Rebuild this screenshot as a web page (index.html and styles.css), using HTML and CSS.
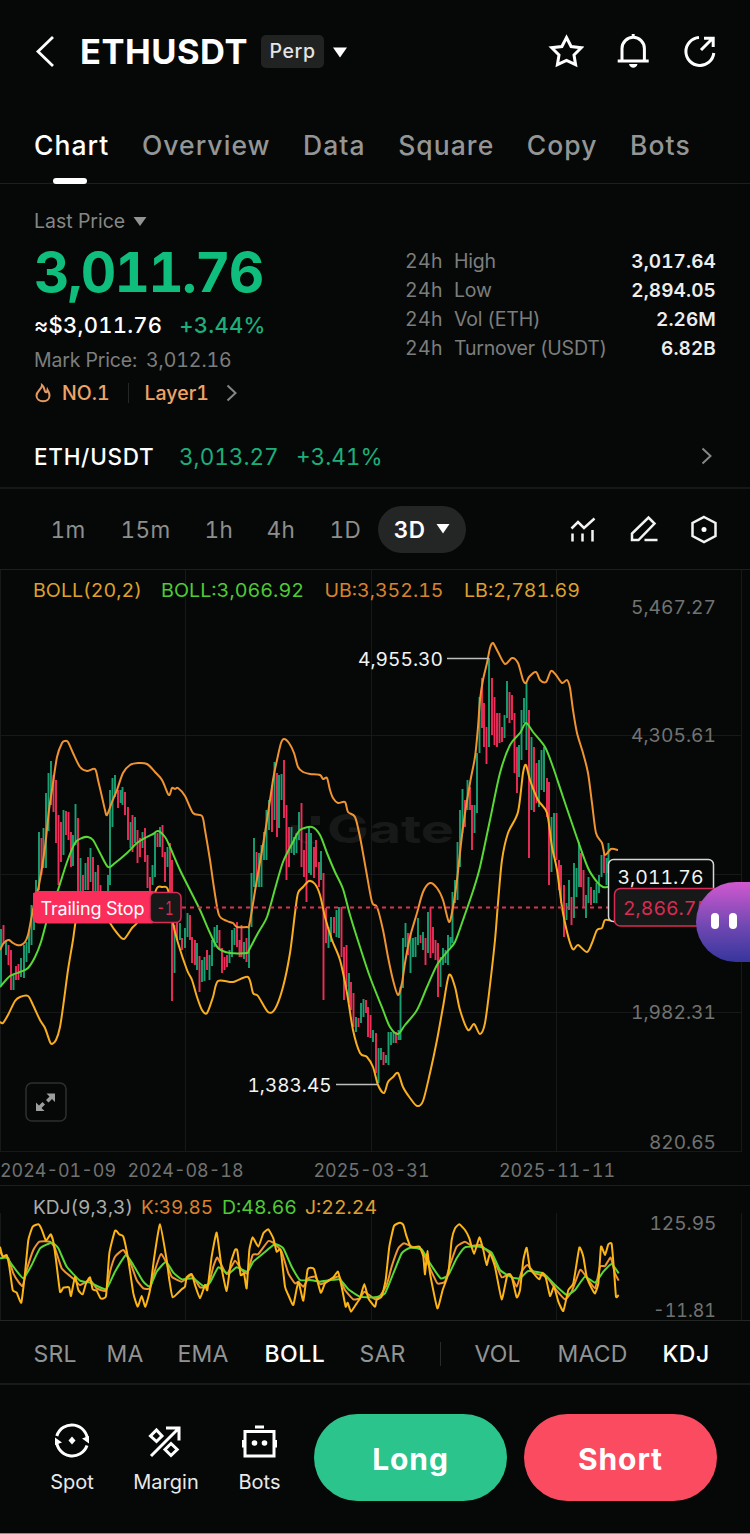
FILE: index.html
```html
<!DOCTYPE html>
<html lang="en">
<head>
<meta charset="utf-8">
<title>ETHUSDT Perp</title>
<link rel="stylesheet" href="styles.css">
</head>
<body>
<main class="app">
  <header class="top">
    <svg class="back" width="20" height="34" viewBox="0 0 20 34"><path d="M18 2 3 16.500 18 31"/></svg>
    <h1 class="symbol">ETHUSDT</h1>
    <span class="perp">Perp</span>
    <svg class="solid white" width="16" height="12" viewBox="0 0 16 12"><path d="M1 1.500h14L8 11.500z"/></svg>
    <div class="actions">
      <svg class="line" width="36" height="36" viewBox="0 0 36 36"><path d="M18.500 3.500l4.600 9 10.200 1.200-7.300 7.300 1.600 9.700L18.500 26.500 9.400 30.700l1.600-9.700L3.700 13.700l10.200-1.200z"/></svg>
      <svg class="line" width="36" height="36" viewBox="0 0 36 36"><path d="M7 26V14.500a11.200 11.200 0 0 1 22.400 0V26M2.700 27h31M18.200 0v3"/><path class="fill" stroke="none" d="M14 30h8.500c-1 5-7.500 5-8.500 0z"/></svg>
      <svg class="line" width="36" height="36" viewBox="0 0 36 36"><path d="M17 3.500A14 14 0 1 0 31.800 19M19 16 30.500 4.500M22 4.200h9.200V13"/></svg>
    </div>
  </header>
  <nav class="tabs">
    <a class="on">Chart</a><a>Overview</a><a>Data</a><a>Square</a><a>Copy</a><a>Bots</a>
  </nav>
  <section class="quote">
    <div class="price">
      <div class="lastlabel"><span>Last Price</span><svg class="solid" width="14" height="10" viewBox="0 0 14 10"><path d="M.500 1h13L7 10z"/></svg></div>
      <div class="last">3,011.76</div>
      <div class="fiat"><span class="usd">≈$3,011.76</span><span class="up">+3.44%</span></div>
      <div class="mark"><span>Mark Price:</span><span class="num">3,012.16</span></div>
      <div class="tags">
        <svg class="flame" width="18" height="20" viewBox="0 0 18 20"><path d="M8 2c.300 4-5.500 6-5.500 10.500 0 3.500 3 5.700 6.700 5.700s6.300-2.200 6.300-5.700c0-3-1.300-4-2-5.500-.300 1.800-1.400 2.600-2.100 2C10 7.500 10.800 4 8 2z"/></svg>
        <span class="no">NO.1</span><i></i><span class="layer">Layer1</span>
        <svg class="chev" width="11" height="18" viewBox="0 0 11 18"><path d="M1.500 1.500 9.500 9l-8 7.500"/></svg>
      </div>
    </div>
    <dl class="stats">
      <div><dt><span>24h</span>High</dt><dd>3,017.64</dd></div>
      <div><dt><span>24h</span>Low</dt><dd>2,894.05</dd></div>
      <div><dt><span>24h</span>Vol (ETH)</dt><dd>2.26M</dd></div>
      <div><dt><span>24h</span>Turnover (USDT)</dt><dd>6.82B</dd></div>
    </dl>
  </section>
  <section class="pair">
    <b>ETH/USDT</b><span class="up p1">3,013.27</span><span class="up p2">+3.41%</span>
    <svg class="chev" width="11" height="18" viewBox="0 0 11 18"><path d="M1.500 1.500 9.500 9l-8 7.500"/></svg>
  </section>
  <nav class="frames">
    <a class="f1">1m</a><a class="f2">15m</a><a class="f3">1h</a><a class="f4">4h</a><a class="f5">1D</a>
    <a class="pill">3D<svg class="solid white" width="14" height="11" viewBox="0 0 14 11"><path d="M.500 0h13L7 9.500z"/></svg></a>
    <div class="tools">
      <svg class="thin" width="30" height="30" viewBox="0 0 30 30"><path d="M4.500 14.500 11 8 17 14 27.500 4.500M5.500 19.500v8M15.500 19.500v8M25.500 16v11.500"/></svg>
      <svg class="thin" width="30" height="30" viewBox="0 0 30 30"><path d="M4 26v-6.500L20.500 3.500l6 6L10.500 26zM16.500 26h13"/></svg>
      <svg class="thin" width="30" height="30" viewBox="0 0 30 30"><path d="M15 3 26.500 9v13L15 28 3.500 22V9z"/><circle class="fill" cx="15" cy="15.500" r="2.500" stroke="none"/></svg>
    </div>
  </nav>
  <section class="chart">
    <svg class="plot" width="750" height="615" viewBox="0 570 750 615">
      <path class="grid" d="M0 735.500H742M0 874.500H742M0 1012.500H742M0 1151.500H742M.500 570V1151M185.500 570V1151M371.500 570V1151M556.500 570V1151M741.500 570V1151"/>
      <g class="watermark"><path d="M311 816h9v9h-9zM291 825a18 18 0 0 0 26 17h-9a11 11 0 0 1-8-17z"/><text x="327" y="843" textLength="127" lengthAdjust="spacingAndGlyphs">Gate</text></g>
      <g id="candles"></g>
      <path id="upper" class="curve upper"/><path id="lower" class="curve lower"/><path id="middle" class="curve middle"/>
      <path class="stop" d="M182 907.500H614"/>
      <path class="leader" d="M447 658.500H489M336 1084.500H377"/>
      <g class="peak"><text x="358" y="666" textLength="85" lengthAdjust="spacingAndGlyphs">4,955.30</text><text x="247.500" y="1092" textLength="84" lengthAdjust="spacingAndGlyphs">1,383.45</text></g>
      <g class="legend">
        <text class="c-low" x="33" y="597" textLength="109" lengthAdjust="spacingAndGlyphs">BOLL(20,2)</text>
        <text class="c-mid" x="161" y="597" textLength="143" lengthAdjust="spacingAndGlyphs">BOLL:3,066.92</text>
        <text class="c-up" x="324.500" y="597" textLength="119" lengthAdjust="spacingAndGlyphs">UB:3,352.15</text>
        <text class="c-low" x="464" y="597" textLength="116" lengthAdjust="spacingAndGlyphs">LB:2,781.69</text>
      </g>
      <g class="axis">
        <text x="631" y="614" textLength="85" lengthAdjust="spacingAndGlyphs">5,467.27</text><text x="631" y="741.500" textLength="85" lengthAdjust="spacingAndGlyphs">4,305.61</text>
        <text x="631" y="1018.500" textLength="85" lengthAdjust="spacingAndGlyphs">1,982.31</text><text x="649" y="1148.500" textLength="67" lengthAdjust="spacingAndGlyphs">820.65</text>
        <text x="0" y="1176.500" textLength="116" lengthAdjust="spacingAndGlyphs">2024-01-09</text><text x="127.500" y="1176.500" textLength="116" lengthAdjust="spacingAndGlyphs">2024-08-18</text>
        <text x="313.500" y="1176.500" textLength="116" lengthAdjust="spacingAndGlyphs">2025-03-31</text><text x="499" y="1176.500" textLength="116" lengthAdjust="spacingAndGlyphs">2025-11-11</text>
      </g>
      <g class="now"><rect x="608.500" y="859.500" width="105" height="62" rx="5"/><text x="617.500" y="884" textLength="86" lengthAdjust="spacingAndGlyphs">3,011.76</text></g>
      <g class="trigger"><rect x="614.500" y="888.500" width="105" height="37.500" rx="6"/><text x="623" y="915" textLength="86" lengthAdjust="spacingAndGlyphs">2,866.75</text></g>
      <g class="order"><rect class="tag" x="33" y="891" width="124" height="32.500" rx="5"/><rect class="qty" x="150" y="892.500" width="31" height="30" rx="5"/><text class="name" x="40.500" y="914.500" textLength="104">Trailing Stop</text><text class="count" x="156.500" y="914.500" textLength="17" lengthAdjust="spacingAndGlyphs">-1</text></g>
      <g class="expand"><rect x="26" y="1083" width="40" height="38" rx="6"/><path d="M46.500 1093.500h8.500v8.500l-3-3-3.500 3.500-2.500-2.500 3.500-3.500zM36 1102.500v8.500h8.500l-3-3 3.500-3.500-2.500-2.500-3.500 3.500z"/></g>
    </svg>
    <svg class="bot" width="54" height="80" viewBox="0 0 54 80">
      <defs><linearGradient id="violet" x1="0" y1="0" x2="0" y2="1"><stop offset="0" stop-color="#d158d0"/><stop offset=".550" stop-color="#7048b2"/><stop offset="1" stop-color="#36369d"/></linearGradient></defs>
      <path fill="url(#violet)" d="M54 0H40a40 40 0 0 0 0 80h14z"/><rect x="15" y="31" width="8" height="16" rx="4"/><rect x="33" y="31" width="8" height="16" rx="4"/>
    </svg>
  </section>
  <section class="kdj">
    <svg width="750" height="136" viewBox="0 1185 750 136">
      <path class="grid" d="M.500 1213V1320M185.500 1213V1320M371.500 1213V1320M556.500 1213V1320M741.500 1213V1320"/>
      <g class="legend"><text class="plain" x="33" y="1213.500" textLength="100" lengthAdjust="spacingAndGlyphs">KDJ(9,3,3)</text><text class="c-up" x="141" y="1213.500" textLength="72" lengthAdjust="spacingAndGlyphs">K:39.85</text><text class="c-mid" x="222" y="1213.500" textLength="75" lengthAdjust="spacingAndGlyphs">D:48.66</text><text class="c-low" x="305" y="1213.500" textLength="72" lengthAdjust="spacingAndGlyphs">J:22.24</text></g>
      <g class="axis"><text x="649.500" y="1230" textLength="67" lengthAdjust="spacingAndGlyphs">125.95</text><text x="653" y="1317" textLength="63" lengthAdjust="spacingAndGlyphs">-11.81</text></g>
      <path id="k" class="curve upper"/><path id="d" class="curve middle"/><path id="j" class="curve jline"/>
    </svg>
  </section>
  <nav class="indicators">
    <a class="i1">SRL</a><a class="i2">MA</a><a class="i3">EMA</a><a class="i4 on">BOLL</a><a class="i5">SAR</a><i></i><a class="i6">VOL</a><a class="i7">MACD</a><a class="i8 on">KDJ</a>
  </nav>
  <footer class="bottom">
    <a class="dock d1"><svg class="line" width="36" height="36" viewBox="0 0 36 36"><path d="M2.800 13A15.700 15.700 0 0 1 33.500 18M33 22.500A15.700 15.700 0 0 1 2.500 17.500"/><path class="fill" stroke="none" d="M28 15.500 35 13v7.500zM8 19.500 1 22V14.500zM18 13.500l3.500 4-3.500 4-3.500-4z"/></svg>Spot</a>
    <a class="dock d2"><svg class="line" width="36" height="36" viewBox="0 0 36 36"><path d="M3 33 30.500 5.500M18 5h13V17.500M8.500 7l5.500 6-5.500 5.500-6-5.500zM23 20.500l6.200 6-6.200 6-6-6z"/></svg>Margin</a>
    <a class="dock d3"><svg class="line" width="36" height="36" viewBox="0 0 36 36"><path d="M3 8.500h29V33H3zM13 4h9M1.500 17v7.500M33.500 17v7.500"/><circle class="fill" stroke="none" cx="12.500" cy="20" r="2.800"/><circle class="fill" stroke="none" cx="22.500" cy="20" r="2.800"/></svg>Bots</a>
    <button class="buy">Long</button><button class="sell">Short</button>
  </footer>
</main>
<script src="chart.js"></script>
</body>
</html>
```
FILE: styles.css
```css
* { box-sizing: border-box; }
body { margin: 0; background: #060807; font-family: Inter, "Liberation Sans", sans-serif; font-variant-numeric: tabular-nums; color: #fff; }
svg { display: block; flex: none; }
h1, dl, dd { margin: 0; }
a, span { white-space: nowrap; }
.app { width: 750px; height: 1534px; overflow: hidden; border-bottom: 1px solid #8d8f8e; }
.top { height: 103px; display: flex; align-items: center; padding-left: 35px; }
.back { fill: none; stroke: #fff; stroke-width: 2.800; }
.symbol { font-size: 34.500px; font-weight: 700; letter-spacing: .500px; margin-left: 25px; width: 167px; white-space: nowrap; }
.perp { width: 63px; height: 33px; margin: 0 8px 0 14px; border-radius: 5px; background: #212322; font-size: 19.500px; line-height: 32px; text-align: center; font-weight: 500; color: #e4e5e4; letter-spacing: .600px; }
.solid { fill: #929493; }
.solid.white { fill: #fff; }
.actions { margin-left: auto; margin-right: 32px; display: flex; gap: 31px; }
.line { fill: none; stroke: #fff; stroke-width: 3; }
.fill { fill: #fff; }
.tabs { height: 81px; border-bottom: 1px solid #1d1f1e; padding: 27px 0 0 34px; display: flex; gap: 32.500px; font-size: 26.500px; font-weight: 500; line-height: 30px; color: #949695; letter-spacing: 1.050px; }
.tabs .on { color: #fff; position: relative; }
.tabs .on::after { content: ""; position: absolute; left: 19px; bottom: -1px; width: 34px; height: 6px; border-radius: 3px; background: #fff; }
.quote { height: 236px; padding: 24px 34px 0; display: flex; justify-content: space-between; }
.lastlabel { display: flex; align-items: center; gap: 8px; font-size: 19.500px; line-height: 26px; height: 26px; color: #858786; }
.last { font-size: 55px; line-height: 76px; height: 76px; font-weight: 700; color: #0fbd7c; letter-spacing: -1.800px; }
.fiat { display: flex; gap: 17px; font-size: 22px; line-height: 30px; height: 32px; font-weight: 500; letter-spacing: .250px; }
.up { color: #1caf7a; }
.mark { display: flex; gap: 9px; font-size: 19.500px; letter-spacing: -.150px; line-height: 36px; height: 34px; color: #7c7e7d; }
.mark .num { letter-spacing: -.100px; }
.tags { display: flex; align-items: center; height: 34px; font-size: 19.500px; font-weight: 500; color: #efa467; }
.tags i { width: 1px; height: 20px; background: #252726; margin: 0 16px 0 18px; }
.tags .chev { margin-left: 17px; }
.flame { fill: none; stroke: #e39a62; stroke-width: 2; }
.no { margin-left: 10px; }
.chev { fill: none; stroke: #858786; stroke-width: 2; }
.stats { width: 311px; padding-top: 39px; font-size: 19.500px; line-height: 29px; }
.stats div { display: flex; justify-content: space-between; }
.stats dt { color: #7c7e7d; letter-spacing: -.200px; }
.stats dt span { display: inline-block; width: 49px; letter-spacing: .400px; }
.stats dd { font-size: 19px; font-weight: 600; color: #eceeed; letter-spacing: .100px; }
.pair { height: 69px; padding: 5px 38px 0 34px; border-bottom: 2px solid #161817; display: flex; align-items: center; font-size: 22.500px; }
.pair b { font-weight: 500; width: 145px; letter-spacing: .700px; }
.pair .chev { margin-left: auto; }
.pair .p1 { width: 117px; }
.frames { height: 81px; border-bottom: 1px solid #1d1f1e; padding-left: 50.500px; display: flex; align-items: center; font-size: 22.500px; letter-spacing: .400px; color: #8d8f8e; }
.f1 { width: 70px; } .f2 { width: 84px; } .f3 { width: 62px; } .f4 { width: 63px; } .f5 { width: 48.500px; }
.pill { width: 88px; height: 47px; border-radius: 24px; background: #242625; display: flex; align-items: center; justify-content: center; gap: 11px; color: #fff; font-weight: 600; }
.tools { display: flex; gap: 31px; margin: 0 31px 0 auto; }
.thin { fill: none; stroke: #f2f3f2; stroke-width: 2.500; overflow: visible; }
.chart { height: 615px; position: relative; }
.bot { position: absolute; right: 0; top: 312px; fill: #fff; }
.grid { fill: none; stroke: #171918; }
.watermark { fill: #171918; }
.watermark text { font-size: 39px; font-weight: 700; }
.g { stroke: #18a073; stroke-width: 1.900; fill: none; }
.r { stroke: #ee2e59; stroke-width: 1.900; fill: none; }
.curve { fill: none; stroke-width: 2; stroke-linejoin: round; }
.upper { stroke: #ef9431; }
.lower { stroke: #f8ae20; }
.middle { stroke: #59d935; }
.jline { stroke: #fdb515; }
.stop { stroke: #e03057; stroke-width: 2; stroke-dasharray: 4 4; }
.leader { stroke: #bcbebd; stroke-width: 1.500; }
.peak text, .now text { font-size: 18.500px; fill: #f3f4f3; }
.legend text { font-size: 18.500px; }
.c-low { fill: #dfa02d; } .c-mid { fill: #4ecb35; } .c-up { fill: #d9822c; } .plain { fill: #aaacab; }
.axis text { font-size: 18.500px; fill: #717372; }
.now rect { fill: #060807; stroke: #d5d7d6; stroke-width: 1.500; }
.trigger rect { fill: #171918; stroke: #d72c55; stroke-width: 1.500; }
.trigger text { font-size: 19px; fill: #d72c55; }
.tag { fill: #fb2d5b; } .qty { fill: #171918; stroke: #d72c55; stroke-width: 1.500; }
.order text { font-size: 18px; fill: #fff; }
.order .count { fill: #d72c55; }
.expand rect { fill: none; stroke: #2d2f2e; stroke-width: 1.500; }
.expand path { fill: #9c9e9d; }
.kdj { height: 136px; border-top: 1px solid #1d1f1e; border-bottom: 1px solid #242625; }
.kdj svg { margin-top: -1px; }
.indicators { height: 62px; display: flex; align-items: center; padding: 3px 0 0 33.500px; font-size: 23px; letter-spacing: .200px; color: #929493; }
.indicators .on { color: #fff; font-weight: 500; letter-spacing: .500px; }
.indicators i { width: 1px; height: 24px; background: #292b2a; margin-right: 34px; }
.i1 { width: 73px; } .i2 { width: 71px; } .i3 { width: 87px; } .i4 { width: 95px; } .i5 { width: 80px; } .i6 { width: 83px; } .i7 { width: 105px; }
.bottom { height: 150px; border-top: 2px solid #181a19; display: flex; padding: 29px 33px 0 34px; }
.dock { height: 88px; padding-top: 9px; display: flex; flex-direction: column; align-items: center; gap: 11px; font-size: 20px; line-height: 24px; color: #e8e9e8; }
.d1 { width: 76px; } .d2 { width: 112px; } .d3 { width: 75px; }
.buy, .sell { width: 193px; height: 87px; border: 0; border-radius: 44px; font: 700 30px Inter, sans-serif; letter-spacing: .900px; color: #fff; padding: 2px 0 0; }
.buy { background: #2ac48c; margin: 0 17px; }
.sell { background: #fb4b61; }
```
FILE: chart.js
```js
// Candle ranges: direction, x, high, low
const candles = `g1 929 985,r3.5 925 944,g6 940 955,r8.5 945 965,r11 950 990,g13.5 975 990,r16 966 980,r18.5 964 980,g21 958 977,g24 945 978,g26.500 942 962,g29 930 953,g31.500 905 945,g34 893 930,g36 880 905,g39 832 890,r41.500 838 875,g43.500 828 868,g46 793 868,g48.500 773 831,g51 761 805,r53.500 775 812,r56 780 843,r58.500 815 885,r61 822 862,g63.500 810 855,r66 811 835,r68.500 812 840,r71 832 867,g73 835 866,g75.500 804 845,r78 818 895,g80.500 858 895,r83 875 895,g85.500 863 890,r88 857 890,g90.500 848 882,r93 857 893,g95.500 872 893,r98 865 893,r100.500 885 895,g108 875 893,g110 790 885,g112.500 778 827,g115 775 797,r118 790 808,g120.500 790 803,g122.500 787 805,r125 792 815,r128 807 840,g130.500 822 848,r132.500 815 852,g135 817 843,r137.500 830 863,r140 838 857,g142.500 832 848,r145 828 862,r147.500 855 888,r150 877 895,g152.500 865 885,g155 833 877,r157.500 833 847,g160 827 847,r162.500 825 857,r165 852 882,g167.500 847 867,r170 843 895,r172 860 1001,g174.500 925 973,r177 921 940,g180 923 940,r182 938 950,g185 928 948,g187.500 913 937,r190 915 940,r192 937 963,r195 940 965,g197 943 970,r199.500 956 992,g202 960 982,g204.500 957 981,r207 950 970,g209.500 955 980,g212 940 966,g214.500 927 947,g217 925 943,r219.500 930 950,r222 948 973,r224.500 957 970,r227 955 967,g229.500 950 963,g232 930 957,g234.500 928 945,r237 922 947,r239.500 940 957,r241.500 925 957,g244 942 959,r246.500 938 962,g249 927 968,g251.500 873 927,g254 838 887,r256.500 852 887,g259 853 887,g261.500 845 887,g264 832 860,g266.500 810 860,g269 800 830,r272 785 832,g274.500 762 820,r277 773 837,g279 775 828,g281.500 774 800,r284 760 818,r286.500 805 880,r289 827 867,g291.500 827 853,g294 837 855,g296.500 833 853,g299 812 840,r301.500 803 867,r304 850 877,r306.500 833 902,g309 827 873,g311 833 875,r314 847 878,r316 840 867,r319 862 887,g321 851 880,r323.500 873 1000,r326 908 943,g328.500 927 948,g331 917 942,r334 917 933,g336.500 910 937,g339 907 938,r341.500 907 957,r344 947 1000,r346.500 945 987,g349 973 1003,r351 982 1010,r353.500 993 1027,g356 1017 1032,r358.500 1018 1027,g361 1003 1023,g363.500 999 1017,r366 1000 1013,r368 1007 1037,r370.500 1015 1038,g373 1030 1042,r376 1033 1073,g378.500 1048 1083,g381 1048 1060,r383.500 1052 1065,g386 1055 1063,g388.500 1032 1065,g391 1032 1045,g393.500 1032 1043,r396 1032 1043,g398.500 1030 1040,g400.500 987 1040,g403 938 988,g405.500 923 947,r408 933 955,g410.500 933 973,g413 938 957,g415.500 937 957,g418 918 945,r420.500 935 943,g423 932 950,r425.500 938 965,g428 912 953,r430.500 907 958,r433 927 953,r435.500 940 960,r438 943 997,g440.500 957 987,g443 948 965,g445.500 950 963,g448 935 965,g450.500 937 947,g452.500 892 943,g455 880 903,g457.500 842 900,g460 810 867,g462.500 789 833,r465 800 827,g467.500 780 810,r470 787 810,r472 805 850,g474.500 805 833,g477 753 813,g479.500 697 753,r482 678 728,r484 703 747,r486.500 727 764,g489 658 747,r492 678 735,r494.500 697 745,r497 713 747,r499.500 713 743,r502 727 742,g504.500 715 738,g507 681 718,r509.500 692 723,r512 695 720,r514.500 713 773,r517 747 793,g519 745 777,g521.500 710 760,g524 698 723,g526.500 683 750,r529 710 858,g531.500 737 810,r534 747 812,r536.500 763 803,g539 760 807,g541.500 750 790,g544 747 792,r547 778 817,r549 782 885,g551.500 817 872,g554 813 855,r556.500 813 860,r559 860 890,r561 865 903,r564 885 937,g566.500 903 920,g569 880 910,r571.500 897 925,g574 863 918,g576.500 868 897,g579 842 887,r581 853 887,r583.500 870 907,g586 895 918,g588.500 877 903,r591 887 905,g594 890 903,g596.500 883 903,g599 875 893,g601.500 855 877,r604 853 873,g606.500 858 885,g608.500 843 873`;
const host = document.getElementById("candles");
for (const side of ["g", "r"]) {
  const path = document.createElementNS("http://www.w3.org/2000/svg", "path");
  path.setAttribute("class", side);
  path.setAttribute("d", candles.split(",").filter(c => c[0] === side).map(c => {
    const [x, high, low] = c.slice(1).split(" ");
    return `M${x} ${high}V${low}`;
  }).join(""));
  host.append(path);
}

// Draws a smooth line through points, keeping local extremes in place.
function draw(id, data, scale = 1, top = 0) {
  const p = data.trim().split(/\s+/).map(s => s.split(",").map(Number)).map(([x, y]) => [x / scale, top + y / scale]);
  let d = `M${p[0]}`;
  for (let i = 0; i < p.length - 1; i++) {
    const a = p[Math.max(0, i - 1)], b = p[i], c = p[i + 1], e = p[Math.min(p.length - 1, i + 2)];
    const m = scale > 1 ? 14 : 7;
    d += `C${b[0] + (c[0] - a[0]) / m},${b[1] + (c[1] - a[1]) / m} ${c[0] - (e[0] - b[0]) / m},${c[1] - (e[1] - b[1]) / m} ${c}`;
  }
  document.getElementById(id).setAttribute("d", d);
}
draw("upper", "0,950 3,944 6,941 9,940 13,943 17,945 21,945 25,942 28,935 31,920 34,905 39,885 45,847 49,810 52,790 57,757 62,743 65,741 68,742 73,753 80,767 87,771 95,769 98,780 102,797 105,810 107,815 112,802 117,790 123,773 130,765 138,763 147,764 155,772 162,780 168,794 170,794 172,788 175,789 178,788 185,796 193,813 202,816 205,830 210,860 214,888 219,915 227,921 233,923 237,927 247,927 249,926 252,910 256,885 265,833 273,780 277,760 281,743 284,739 289,743 294,753 298,767 303,772 310,774 320,775 323,779 327,778 330,790 333,798 338,803 345,802 348,812 355,817 360,837 366,870 372,902 377,907 383,930 388,957 393,980 398,995 402,983 405,963 410,937 417,913 423,892 430,883 437,888 443,900 449,922 453,907 457,880 463,827 470,783 475,757 478,727 480,700 483,680 487,663 490,648 493,643 498,652 505,664 512,658 518,663 523,680 526,683 529,677 536,672 540,680 546,682 551,671 556,675 562,683 567,680 570,688 573,710 577,733 583,753 588,773 592,803 596,833 602,843 605,855 611,849 618,850");
draw("middle", "0,987 10,976 20,972 28,968 35,957 41,942 47,920 52,905 58,890 67,862 75,843 82,838 88,837 93,840 100,853 108,867 115,863 127,853 137,843 147,837 153,834 158,831 165,837 170,847 180,870 190,890 200,910 210,933 218,948 230,953 247,953 249,950 258,933 267,917 275,889 283,862 293,842 300,830 312,827 320,835 327,853 335,872 343,889 350,915 360,947 370,977 383,1010 390,1027 398,1034 405,1025 417,1010 427,987 437,965 447,952 455,942 463,920 473,891 480,867 490,820 500,773 510,745 520,733 526,723 533,732 545,747 553,767 563,797 577,838 588,868 597,882 603,887 608,887");
draw("lower", "0,1022 3,1023 8,1015 15,1001 20,997 28,996 33,1005 40,1020 45,1028 50,1042 52,1044 56,1040 60,1027 64,1000 68,970 73,940 76,920 82,902 90,896 100,905 110,923 117,933 124,939 132,928 137,923 150,905 157,888 162,887 168,890 173,923 178,943 187,970 192,980 197,997 202,1010 207,1013 213,997 218,981 233,982 248,977 253,993 258,996 268,1012 275,1009 283,987 290,953 295,913 298,893 303,887 309,881 315,884 320,895 325,917 332,940 340,960 347,993 353,1030 360,1053 367,1057 373,1067 378,1085 384,1093 388,1082 393,1077 398,1073 403,1087 410,1098 417,1106 423,1101 430,1073 437,1040 443,1007 449,975 455,987 460,1010 468,1030 474,1024 480,1034 485,1023 490,985 495,940 498,903 502,860 508,833 518,812 523,773 526,765 530,780 538,800 547,813 552,847 557,870 563,913 572,948 578,945 587,952 592,943 597,930 602,928 605,920 612,921");
draw("j", "0,170 8,200 20,195 28,230 38,300 50,308 64,338 75,250 85,150 98,110 115,103 125,118 138,152 152,133 160,155 168,210 180,305 190,293 207,292 213,318 225,260 235,300 248,313 258,280 270,262 278,298 290,302 302,325 318,318 328,190 345,122 358,133 370,140 385,210 400,310 413,350 425,318 436,350 450,300 463,200 480,103 500,210 508,270 518,322 545,298 555,290 560,262 575,252 585,285 600,325 615,285 622,300 635,200 650,128 665,235 680,303 692,220 705,180 712,182 722,255 732,250 740,295 748,180 758,142 775,170 790,130 805,118 820,145 830,185 842,180 855,290 865,315 880,345 895,275 910,332 923,238 942,237 962,308 975,280 1000,262 1014,245 1025,290 1037,350 1043,338 1053,365 1070,340 1080,325 1093,282 1105,325 1125,350 1130,330 1145,320 1157,270 1168,170 1182,108 1200,98 1210,105 1220,140 1233,172 1258,170 1270,200 1275,253 1282,183 1290,250 1312,355 1328,300 1345,250 1355,150 1365,115 1378,103 1395,120 1408,145 1422,192 1438,142 1450,180 1460,225 1470,190 1485,230 1505,328 1522,255 1535,260 1550,322 1560,300 1570,210 1580,173 1590,235 1605,255 1618,268 1627,248 1638,265 1650,318 1662,290 1675,335 1690,363 1705,300 1720,280 1738,173 1750,200 1760,260 1775,295 1785,310 1795,280 1803,170 1815,195 1825,163 1835,162 1842,240 1848,320 1856,315", 3, 1190);
draw("k", "0,185 10,200 25,205 40,250 55,275 68,288 80,240 100,180 118,155 150,155 165,175 185,235 210,258 225,270 240,285 270,270 290,295 318,302 330,245 345,200 370,180 390,215 410,270 430,295 450,295 465,240 483,192 500,220 515,260 545,275 575,255 600,292 625,285 640,230 652,203 680,252 705,212 725,240 742,250 758,195 775,192 805,153 825,162 845,185 865,250 885,280 895,275 910,290 925,265 945,260 962,283 1000,265 1018,260 1035,300 1060,328 1080,325 1093,305 1125,328 1140,318 1160,285 1175,230 1195,175 1212,160 1240,172 1265,180 1290,235 1312,280 1335,275 1350,225 1370,170 1395,155 1415,168 1440,165 1470,190 1485,215 1505,262 1530,252 1550,290 1565,245 1582,225 1605,250 1640,260 1665,295 1695,328 1715,305 1740,240 1755,255 1785,295 1800,230 1815,228 1832,203 1845,250 1856,272", 3, 1190);
draw("d", "0,205 20,203 40,230 70,265 95,225 120,175 155,158 175,175 200,230 240,272 270,278 318,298 345,245 378,195 400,225 430,275 450,290 470,245 498,215 520,248 545,268 580,265 610,288 630,278 655,232 685,252 710,232 742,245 760,215 790,190 825,162 850,175 875,230 900,270 930,270 960,275 1018,268 1045,298 1080,320 1125,322 1155,310 1180,250 1205,190 1230,173 1265,178 1290,220 1322,265 1345,255 1370,205 1395,172 1440,170 1475,188 1500,240 1535,262 1560,265 1585,243 1630,250 1665,285 1700,315 1725,300 1755,260 1785,278 1810,245 1835,222 1856,250", 3, 1190);
```
